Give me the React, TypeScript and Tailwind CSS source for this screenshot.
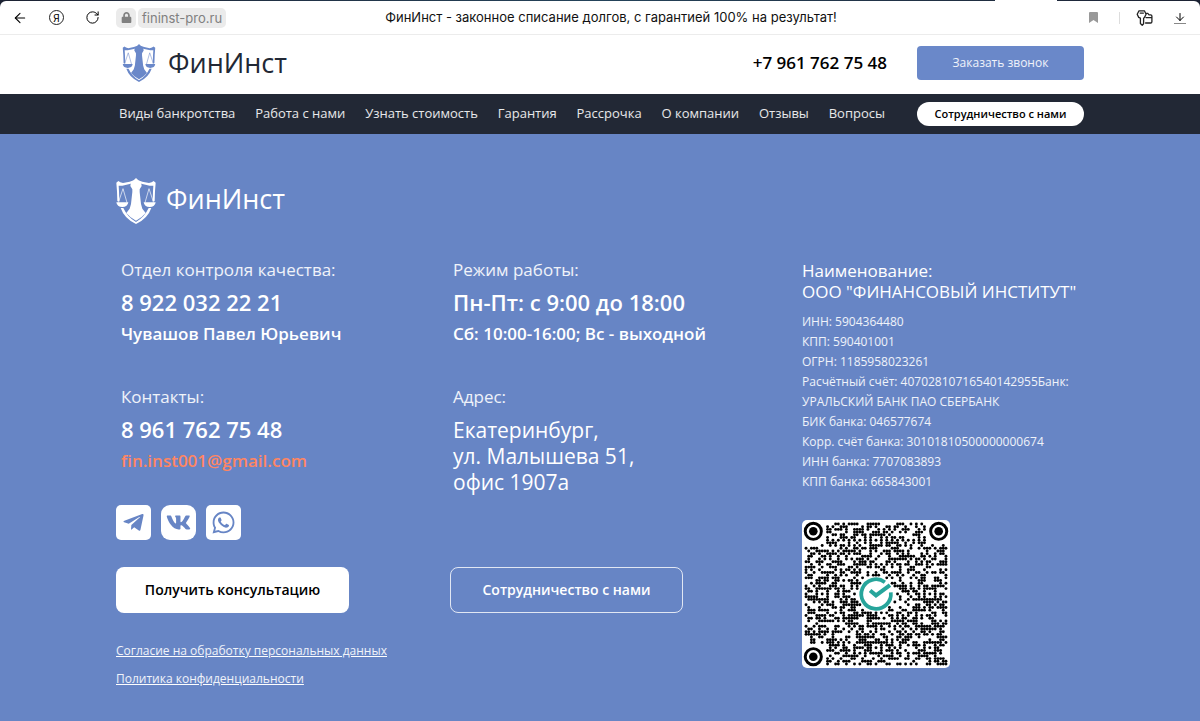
import { ArrowLeft, ArrowDown, RotateCw } from "lucide-react";
import { FaTelegramPlane, FaVk, FaWhatsapp, FaLock } from "react-icons/fa";

const NAV = [
  "Виды банкротства",
  "Работа с нами",
  "Узнать стоимость",
  "Гарантия",
  "Рассрочка",
  "О компании",
  "Отзывы",
  "Вопросы",
];

const REQUISITES = [
  "ИНН: 5904364480",
  "КПП: 590401001",
  "ОГРН: 1185958023261",
  "Расчётный счёт: 40702810716540142955Банк:",
  "УРАЛЬСКИЙ БАНК ПАО СБЕРБАНК",
  "БИК банка: 046577674",
  "Корр. счёт банка: 30101810500000000674",
  "ИНН банка: 7707083893",
  "КПП банка: 665843001",
];

const SIZE = 53;
const ALIGN = [
  [26, 6],
  [6, 26],
  [46, 26],
  [26, 46],
  [46, 46],
];

function buildModules() {
  const dots: [number, number][] = [];
  let seed = 20231;
  for (let y = 0; y < SIZE; y++) {
    for (let x = 0; x < SIZE; x++) {
      seed = (seed * 1103515245 + 12345) % 2147483648;
      let on = (seed >> 12) % 100 < 48;
      const finder = (x < 8 && y < 8) || (x > 44 && y < 8) || (x < 8 && y > 44);
      if (finder) continue;
      if (Math.hypot(x - 26, y - 26) < 7) continue;
      if (x === 6 || y === 6) on = (x + y) % 2 === 0;
      for (const [ax, ay] of ALIGN) {
        const d = Math.max(Math.abs(x - ax), Math.abs(y - ay));
        if (d <= 2) on = d !== 1;
      }
      if (on) dots.push([x, y]);
    }
  }
  return dots;
}

const MODULES = buildModules();

function QrCode() {
  return (
    <svg viewBox="-1 -1 55 55" className="h-[148px] w-[148px] rounded-[5px] bg-white" role="img" aria-label="QR">
      {MODULES.map(([x, y]) => (
        <circle key={`${x}-${y}`} cx={x + 0.5} cy={y + 0.5} r="0.54" fill="#000" />
      ))}
      {[[3.2, 3.2], [49.8, 3.2], [3.2, 49.8]].map(([x, y]) => (
        <g key={`${x}-${y}`}>
          <circle cx={x} cy={y} r="3" fill="none" stroke="#000" strokeWidth="1.1" />
          <circle cx={x} cy={y} r="1.6" fill="#000" />
        </g>
      ))}
      <path d="M29.8 22.1 A5.5 5.5 0 1 0 32 25.9" fill="none" stroke="#27a59b" strokeWidth="1.4" />
      <path d="M24.3 25.2 L26.5 27 L31.7 23.2" fill="none" stroke="#27a59b" strokeWidth="1.5" />
    </svg>
  );
}

function Shield({ className }: { className: string }) {
  return (
    <svg viewBox="0 0 118 138" className={className} fill="currentColor" aria-hidden="true">
      <path d="M59 0 66 7 78 11 98 15 106 13 112 9 118 14 116 40 115 70 109 70 110 40 111 23 100 23 78 18 59 12 40 18 18 23 7 23 8 40 9 70 3 70 2 40 0 14 6 9 12 13 20 15 40 11 52 7Z" />
      <path d="M59 4 74 12 76 24 70 34 70 42 74 78 78 92 88 105 76 117 59 128 42 117 30 105 40 92 44 78 48 42 48 34 42 24 44 12Z" />
      <path d="M13 90H21Q34 118 59 132Q84 118 97 90H105Q94 122 59 138Q24 122 13 90Z" />
      <path d="M0 73H36Q34 87 18 87Q2 87 0 73ZM82 73H118Q116 87 100 87Q84 87 82 73Z" />
      <path d="M20 32 6 74M20 32 32 74M98 32 86 74M98 32 112 74" fill="none" stroke="currentColor" strokeWidth="2" />
    </svg>
  );
}

function KeyIcon() {
  return (
    <svg viewBox="0 0 18 18" className="h-[18px] w-[18px]" fill="none" stroke="#222" strokeWidth="1.3" strokeLinejoin="round" strokeLinecap="round" aria-hidden="true">
      <path d="M3 1.8h5.4l1.7 3.4-1.7 3.4-.8.6v5.6l-1.4 1.4-1.8-1.6V9.2L2.7 8.4 1.2 5.2Z" />
      <path d="M4.2 4.1h3.2" />
      <path d="M10.4 4.4h1.4l1.2 1.4h1.6q1.3 0 1.3 1.3v5.6q0 1.3-1.3 1.3H9.6M10 8.6h5.8" />
    </svg>
  );
}

function BrowserBar() {
  return (
    <div className="bg-[#1c2233]">
      <div className="flex h-px justify-end bg-gradient-to-r from-[#1c2233] via-[#24435a] to-[#1c2233] pr-[143px]">
        <div className="w-[62px] bg-white" />
      </div>
      <div className="grid h-[34px] grid-cols-[1fr_auto_1fr] items-center rounded-t-[6px] border-b border-[#ececec] bg-white pl-3 pr-[14px] font-['Inter',sans-serif] text-[13px]">
        <div className="flex items-center">
          <button aria-label="Назад" className="w-4">
            <ArrowLeft size={16} strokeWidth={1.6} />
          </button>
          <button aria-label="Яндекс" className="ml-[21px] flex h-[15px] w-[15px] items-center justify-center rounded-full border border-[#222] text-[10px] leading-none">
            Я
          </button>
          <button aria-label="Обновить" className="ml-[21px]">
            <RotateCw size={15} strokeWidth={1.6} />
          </button>
          <span className="ml-4 flex h-5 w-5 items-center justify-center rounded-[5px] bg-[#ebebeb] text-[#808080]">
            <FaLock size={11} />
          </span>
          <span className="ml-[2px] rounded-[5px] bg-[#ebebeb] px-1 leading-5 text-[#808080]">fininst-pro.ru</span>
        </div>
        <div className="whitespace-nowrap pl-6 text-[#111]">ФинИнст - законное списание долгов, с гарантией 100% на результат!</div>
        <div className="flex items-center justify-end">
          <button aria-label="Закладка">
            <svg viewBox="0 0 9 11" className="h-[11px] w-[9px]" aria-hidden="true">
              <path d="M1 0H8Q9 0 9 1V11L4.5 8 0 11V1Q0 0 1 0Z" fill="#999" />
            </svg>
          </button>
          <span className="ml-[21px] h-3 w-px bg-[#ddd]" />
          <button aria-label="Пароли" className="ml-4">
            <KeyIcon />
          </button>
          <button aria-label="Загрузки" className="ml-5 border-b border-[#888]">
            <ArrowDown size={12} strokeWidth={2} />
          </button>
        </div>
      </div>
    </div>
  );
}

export default function App() {
  return (
    <div className="flex min-h-screen flex-col bg-[#6785c5] font-['Open_Sans',sans-serif]">
      <BrowserBar />

      <header className="bg-white">
        <div className="mx-auto flex h-[59px] max-w-[968px] items-center pb-1">
          <a href="#" className="flex items-center gap-3 pl-[6px] text-[#222835]">
            <Shield className="h-[38px] w-[34px] text-[#6a88c9]" />
            <span className="text-[27px] leading-9">ФинИнст</span>
          </a>
          <a href="tel:+79617627548" className="ml-auto text-[17px] font-semibold text-black">+7 961 762 75 48</a>
          <button className="ml-[30px] h-[34px] w-[167px] rounded bg-[#6a88c9] text-xs text-white/90">Заказать звонок</button>
        </div>
      </header>

      <nav className="bg-[#222835]">
        <div className="mx-auto flex h-10 max-w-[968px] items-center">
          <div className="flex flex-1 justify-between pl-[3px] pr-8 text-[13px] text-white/90">
            {NAV.map((item) => (
              <a key={item} href="#" className="whitespace-nowrap">{item}</a>
            ))}
          </div>
          <button className="h-6 w-[167px] rounded-full bg-white text-[11px] font-semibold text-black">Сотрудничество с нами</button>
        </div>
      </nav>

      <main className="mx-auto w-full max-w-[968px] flex-1 pb-8 pt-11 text-white">
        <a href="#" className="flex w-fit items-center gap-[10px]">
          <Shield className="h-[46px] w-10" />
          <span className="pb-1 text-[27px] leading-9">ФинИнст</span>
        </a>

        <div className="mt-9 grid grid-cols-[686fr_282fr]">
          <div>
            <div className="grid grid-cols-[334fr_352fr]">
              <section className="pl-[5px]">
                <h2 className="text-[17px] leading-5 text-white/90">Отдел контроля качества:</h2>
                <p className="mt-2 text-[22px] font-semibold leading-7">8 922 032 22 21</p>
                <p className="mt-2 text-[17px] font-semibold leading-5">Чувашов Павел Юрьевич</p>
              </section>
              <section className="pl-[3px]">
                <h2 className="text-[17px] leading-5 text-white/90">Режим работы:</h2>
                <p className="mt-2 text-[22px] font-semibold leading-7">Пн-Пт: с 9:00 до 18:00</p>
                <p className="mt-2 text-[17px] font-semibold leading-5">Сб: 10:00-16:00; Вс - выходной</p>
              </section>

              <section className="mt-[43px]">
                <div className="pl-[5px]">
                  <h2 className="text-[17px] leading-5 text-white/90">Контакты:</h2>
                  <p className="mt-2 text-[22px] font-semibold leading-7">8 961 762 75 48</p>
                  <a href="mailto:fin.inst001@gmail.com" className="mt-2 block text-[17px] font-semibold leading-5 text-[#ff8562]">fin.inst001@gmail.com</a>
                </div>
                <div className="mt-[34px] flex gap-[10px] text-[#6785c5]">
                  <a href="#" aria-label="Telegram" className="flex h-[35px] w-[35px] items-center justify-center rounded-[5px] bg-white">
                    <FaTelegramPlane size={23} />
                  </a>
                  <a href="#" aria-label="VK" className="flex h-[35px] w-[35px] items-center justify-center rounded-[9px] bg-white">
                    <FaVk size={25} />
                  </a>
                  <a href="#" aria-label="WhatsApp" className="flex h-[35px] w-[35px] items-center justify-center rounded-[5px] bg-white">
                    <FaWhatsapp size={25} />
                  </a>
                </div>
              </section>
              <section className="mt-[43px] pl-[3px]">
                <h2 className="text-[17px] leading-5 text-white/90">Адрес:</h2>
                <p className="mt-[10px] text-[21px] font-medium leading-[26px]">
                  Екатеринбург,
                  <br />
                  ул. Малышева 51,
                  <br />
                  офис 1907а
                </p>
              </section>

              <button className="mt-[27px] h-[46px] w-[233px] rounded-lg bg-white text-sm font-semibold text-black">Получить консультацию</button>
              <button className="mt-[27px] h-[46px] w-[233px] rounded-lg border border-white/80 text-sm font-semibold">Сотрудничество с нами</button>
            </div>

            <div className="mt-7 flex flex-col items-start gap-2 text-xs leading-5 text-white/90 underline">
              <a href="#">Согласие на обработку персональных данных</a>
              <a href="#">Политика конфиденциальности</a>
            </div>
          </div>

          <section>
            <h2 className="whitespace-nowrap text-[17px] font-medium leading-[21px]">
              Наименование:
              <br />
              ООО "ФИНАНСОВЫЙ ИНСТИТУТ"
            </h2>
            <ul className="mt-[10px] text-xs leading-5 text-white/90">
              {REQUISITES.map((line) => (
                <li key={line} className="whitespace-nowrap">{line}</li>
              ))}
            </ul>
            <div className="mt-7">
              <QrCode />
            </div>
          </section>
        </div>
      </main>
    </div>
  );
}
